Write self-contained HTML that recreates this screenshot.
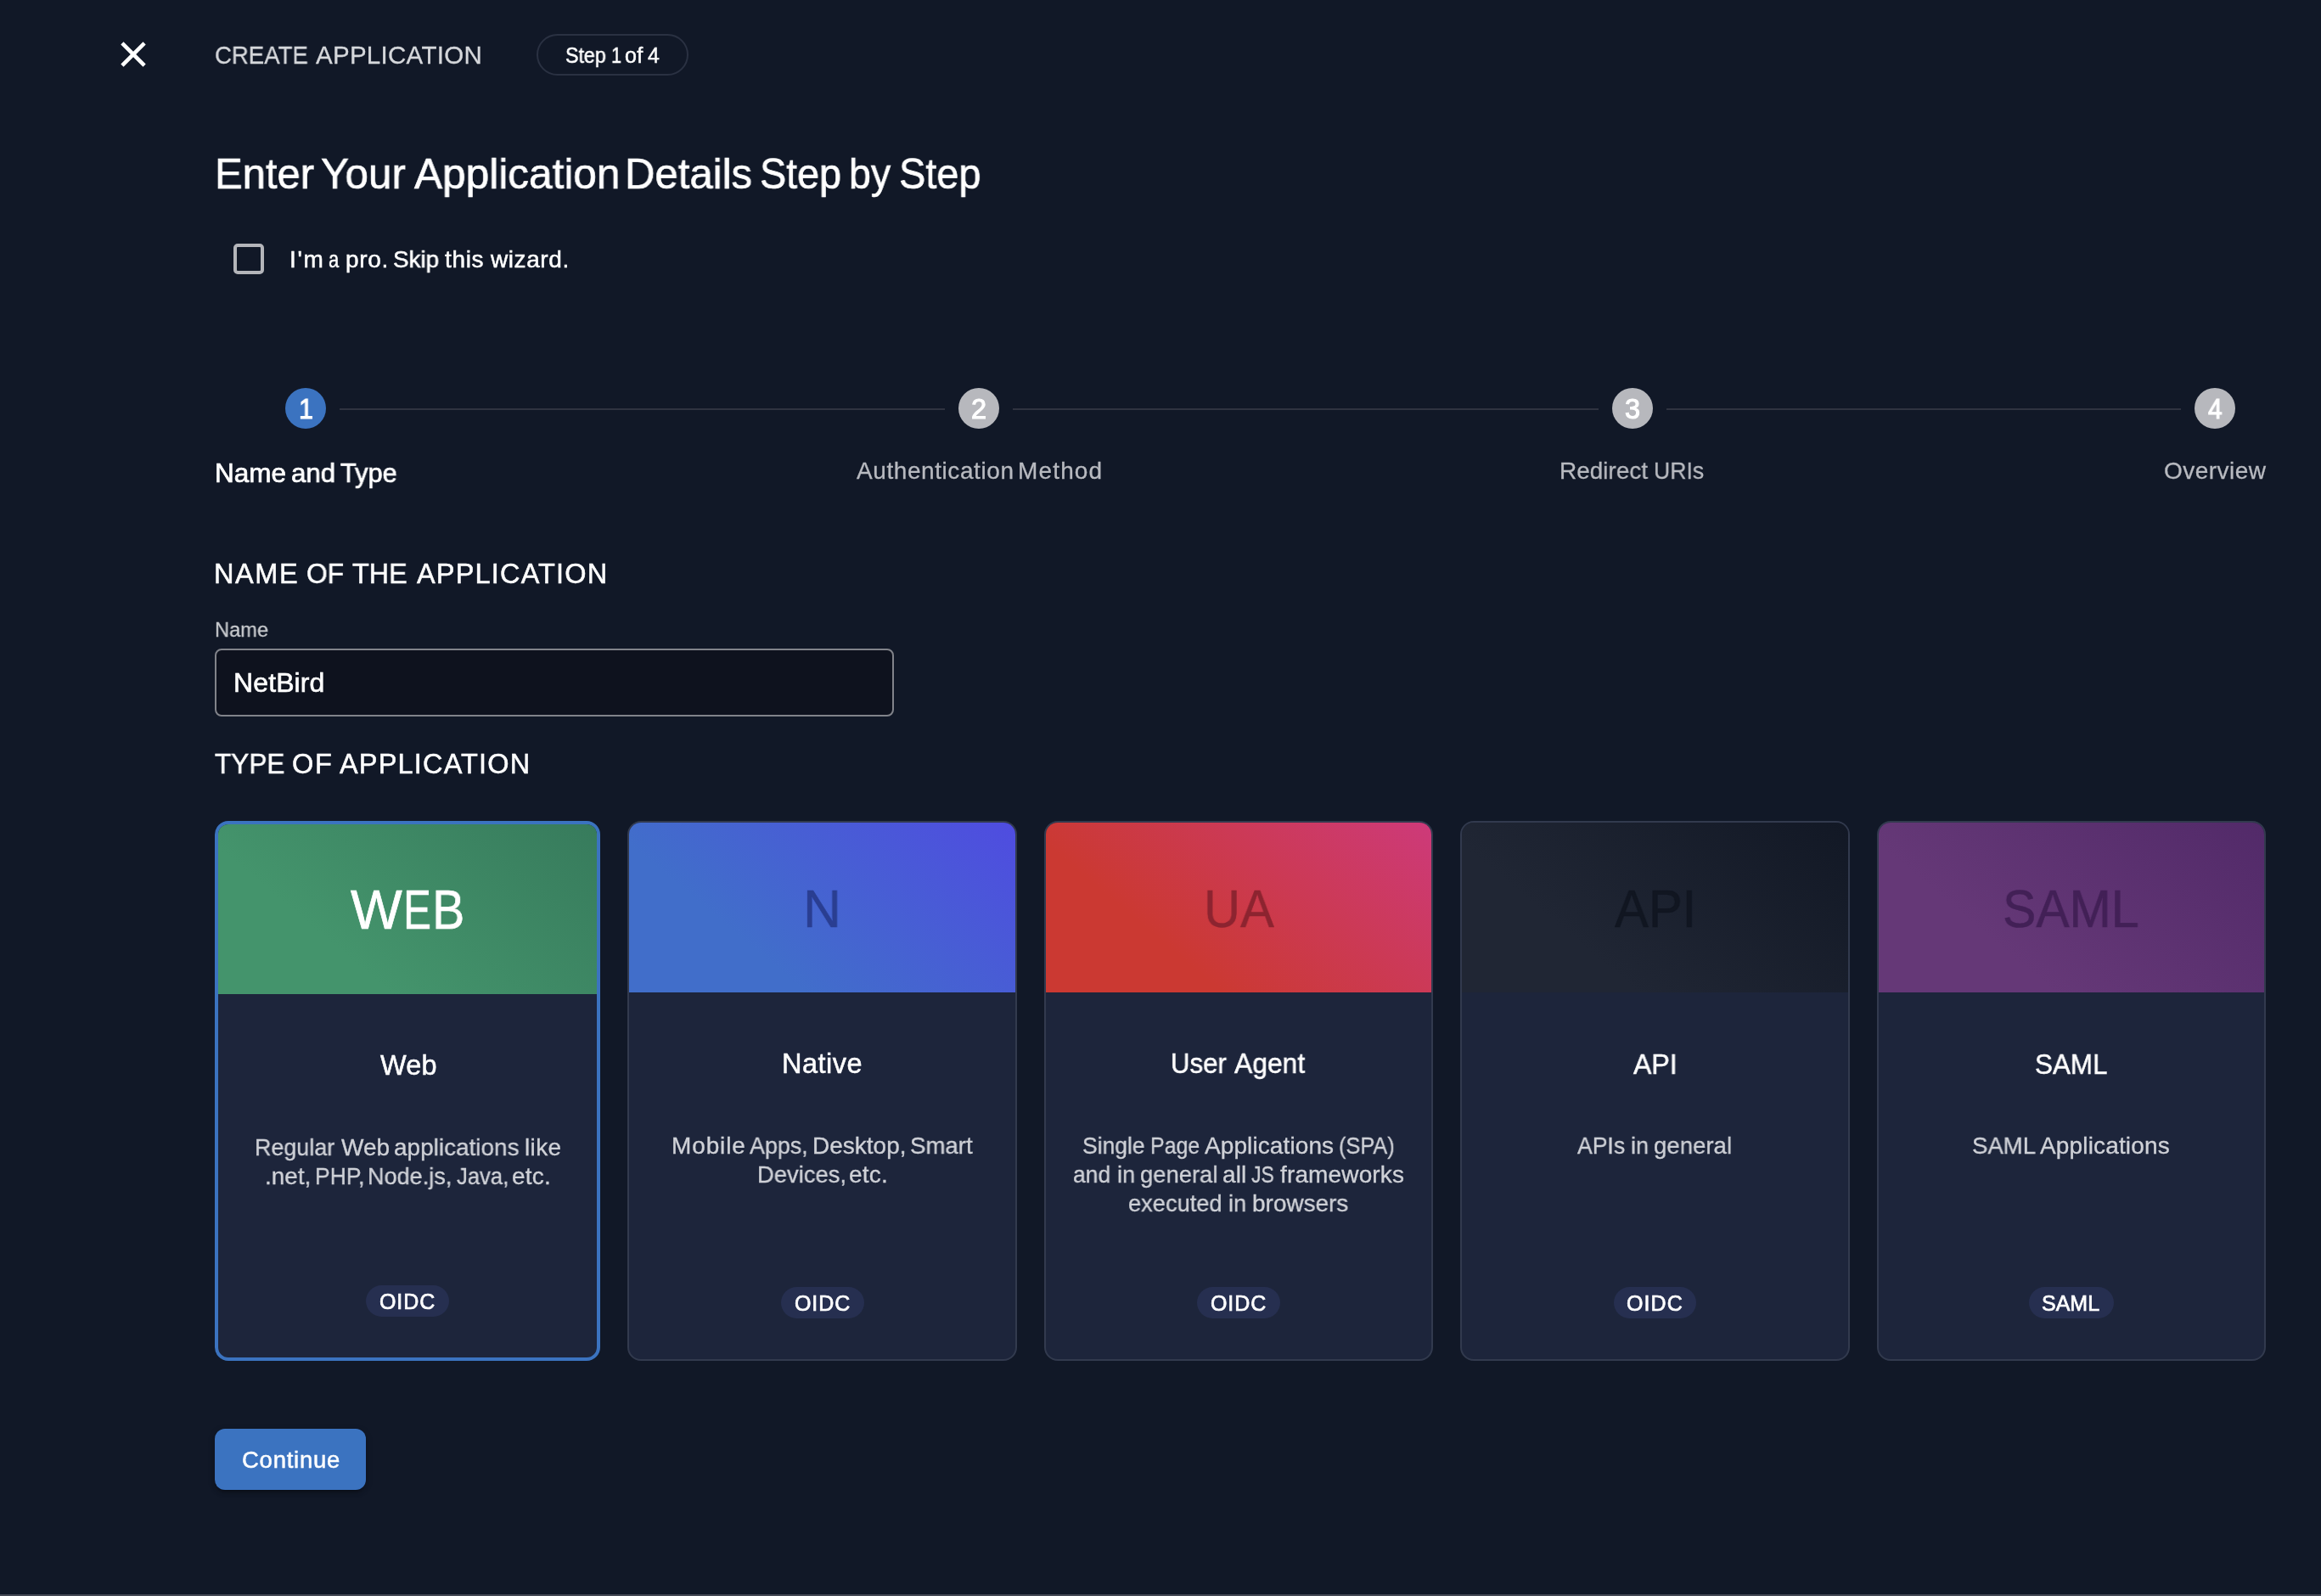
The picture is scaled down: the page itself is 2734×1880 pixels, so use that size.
<!DOCTYPE html>
<html><head><meta charset="utf-8"><title>Create Application</title>
<style>
html,body{margin:0;padding:0}
body{width:2734px;height:1880px;background:#111827;position:relative;overflow:hidden;font-family:'Liberation Sans', sans-serif;}
.t{position:absolute;white-space:nowrap;transform-origin:0 50%;will-change:transform;font-family:'Liberation Sans', sans-serif;}
.abs{position:absolute}
.pill{position:absolute;left:632px;top:40px;width:179px;height:49px;box-sizing:border-box;border:2px solid #2a3142;border-radius:25px}
.cb{position:absolute;left:275px;top:287px;width:36px;height:36px;box-sizing:border-box;border:4px solid #b4b5ba;border-radius:5px}
.circ{position:absolute;top:457px;width:48px;height:48px;border-radius:50%}
.ln{position:absolute;top:481px;height:2px;background:#2f3340}
.inp{position:absolute;left:253px;top:764px;width:800px;height:80px;box-sizing:border-box;border:2px solid #81838a;border-radius:8px;background:#0e121e}
.card{position:absolute;top:967px;height:636px;box-sizing:border-box;border-radius:16px;background:#1d253b;overflow:hidden}
.ch{height:200px}
.badge{position:absolute;height:37px;border-radius:19px;background:#262f50}
.btn{position:absolute;left:253px;top:1683px;width:178px;height:72px;border-radius:12px;background:#3b73c0;box-shadow:0 6px 2px -4px rgba(0,0,0,.2),0 4px 4px rgba(0,0,0,.14),0 2px 10px rgba(0,0,0,.12)}
.bl{position:absolute;left:0;top:1878px;width:2734px;height:2px;background:#444854}
</style></head><body>
<svg class="abs" style="left:138px;top:44.75px" width="38" height="38" viewBox="0 0 38 38"><path d="M7.5 4.3 L19 15.8 L30.5 4.3 L33.7 7.5 L22.2 19 L33.7 30.5 L30.5 33.7 L19 22.2 L7.5 33.7 L4.3 30.5 L15.8 19 L4.3 7.5 Z" fill="#fff"/></svg>
<div class="pill"></div>
<div class="cb"></div>
<div class="circ" style="left:336px;background:#3b73c0"></div>
<div class="circ" style="left:1129px;background:#b7b8bd"></div>
<div class="circ" style="left:1899px;background:#b7b8bd"></div>
<div class="circ" style="left:2585px;background:#b7b8bd"></div>
<div class="ln" style="left:400px;width:713px"></div>
<div class="ln" style="left:1193px;width:690px"></div>
<div class="ln" style="left:1963px;width:606px"></div>
<div class="inp"></div>
<div class="card" style="left:253px;width:454px;border:4px solid #3b73c0;"><div class="ch" style="background:linear-gradient(40deg,#44946c 30%,#377b5c)"></div></div>
<div class="card" style="left:739px;width:459px;border:2px solid #323a4e;"><div class="ch" style="background:linear-gradient(40deg,#416eca 30%,#4f4ce0)"></div></div>
<div class="card" style="left:1230px;width:458px;border:2px solid #323a4e;"><div class="ch" style="background:linear-gradient(40deg,#cb3932 30%,#cd3a7a)"></div></div>
<div class="card" style="left:1720px;width:459px;border:2px solid #323a4e;"><div class="ch" style="background:linear-gradient(40deg,#202634 30%,#121825)"></div></div>
<div class="card" style="left:2211px;width:458px;border:2px solid #323a4e;"><div class="ch" style="background:linear-gradient(40deg,#653877 30%,#522a69)"></div></div>
<div class="badge" style="left:431px;top:1514px;width:98px"></div>
<div class="badge" style="left:920px;top:1516px;width:98px"></div>
<div class="badge" style="left:1410px;top:1516px;width:98px"></div>
<div class="badge" style="left:1900.5px;top:1516px;width:97.5px"></div>
<div class="badge" style="left:2390px;top:1516px;width:100px"></div>
<div class="btn"></div>
<div class="bl"></div>
<span class="t" style="left:2548.75px;top:541.30px;font-size:28px;line-height:28px;color:#b8bac0;letter-spacing:0.464px;-webkit-text-stroke:0.3px #b8bac0;">Overview</span>
<span class="t" style="left:252.57px;top:730.06px;font-size:24.5px;line-height:24.5px;color:#c8cace;-webkit-text-stroke:0.3px #c8cace;transform:scaleX(0.9651);">Name</span>
<span class="t" style="left:274.80px;top:787.91px;font-size:32px;line-height:32px;color:#ffffff;letter-spacing:0.117px;-webkit-text-stroke:0.6px #ffffff;">NetBird</span>
<span class="t" style="left:945.78px;top:1038.84px;font-size:62.5px;line-height:62.5px;color:#2a3e91;-webkit-text-stroke:0.5px #2a3e91;transform:scaleX(0.9931);">N</span>
<span class="t" style="left:1417.94px;top:1039.09px;font-size:62.5px;line-height:62.5px;color:#8c2430;-webkit-text-stroke:0.5px #8c2430;transform:scaleX(0.9518);">UA</span>
<span class="t" style="left:1901.75px;top:1039.09px;font-size:62.5px;line-height:62.5px;color:#111621;-webkit-text-stroke:0.5px #111621;transform:scaleX(0.9553);">API</span>
<span class="t" style="left:2359.17px;top:1039.09px;font-size:62.5px;line-height:62.5px;color:#422056;-webkit-text-stroke:0.5px #422056;transform:scaleX(0.9428);">SAML</span>
<span class="t" style="left:447.50px;top:1239.24px;font-size:32.5px;line-height:32.5px;color:#ffffff;letter-spacing:0.125px;-webkit-text-stroke:0.5px #ffffff;">Web</span>
<span class="t" style="left:921.25px;top:1237.49px;font-size:32.5px;line-height:32.5px;color:#ffffff;letter-spacing:0.500px;-webkit-text-stroke:0.5px #ffffff;">Native</span>
<span class="t" style="left:1923.75px;top:1237.07px;font-size:33px;line-height:33px;color:#ffffff;-webkit-text-stroke:0.5px #ffffff;transform:scaleX(0.9706);">API</span>
<span class="t" style="left:2397.30px;top:1237.07px;font-size:33px;line-height:33px;color:#ffffff;-webkit-text-stroke:0.5px #ffffff;transform:scaleX(0.9517);">SAML</span>
<span class="t" style="left:447.00px;top:1520.84px;font-size:25px;line-height:25px;color:#ffffff;letter-spacing:0.917px;-webkit-text-stroke:0.7px #ffffff;">OIDC</span>
<span class="t" style="left:935.50px;top:1522.59px;font-size:25px;line-height:25px;color:#ffffff;letter-spacing:0.917px;-webkit-text-stroke:0.7px #ffffff;">OIDC</span>
<span class="t" style="left:1425.75px;top:1522.59px;font-size:25px;line-height:25px;color:#ffffff;letter-spacing:0.917px;-webkit-text-stroke:0.7px #ffffff;">OIDC</span>
<span class="t" style="left:1915.70px;top:1522.59px;font-size:25px;line-height:25px;color:#ffffff;letter-spacing:1.100px;-webkit-text-stroke:0.7px #ffffff;">OIDC</span>
<span class="t" style="left:2405.00px;top:1522.59px;font-size:25px;line-height:25px;color:#ffffff;-webkit-text-stroke:0.7px #ffffff;">SAML</span>
<span class="t" style="left:284.50px;top:1706.22px;font-size:27.5px;line-height:27.5px;color:#ffffff;letter-spacing:0.750px;-webkit-text-stroke:0.5px #ffffff;">Continue</span>
<span class="t" style="left:352.13px;top:466.24px;font-size:32.5px;line-height:32.5px;color:#ffffff;-webkit-text-stroke:1.1px #ffffff;transform:scaleX(0.9333);">1</span>
<span class="t" style="left:1144.00px;top:466.24px;font-size:32.5px;line-height:32.5px;color:#ffffff;-webkit-text-stroke:1.1px #ffffff;">2</span>
<span class="t" style="left:1914.00px;top:466.24px;font-size:32.5px;line-height:32.5px;color:#ffffff;-webkit-text-stroke:1.1px #ffffff;">3</span>
<span class="t" style="left:2601.00px;top:466.24px;font-size:32.5px;line-height:32.5px;color:#ffffff;-webkit-text-stroke:1.1px #ffffff;transform:scaleX(0.9167);">4</span>
<span class="t" style="left:665.87px;top:52.64px;font-size:25px;line-height:25px;color:#ffffff;-webkit-text-stroke:0.5px #ffffff;transform:scaleX(0.9280);">Step</span>
<span class="t" style="left:720.12px;top:52.64px;font-size:25px;line-height:25px;color:#ffffff;-webkit-text-stroke:0.5px #ffffff;transform:scaleX(0.8750);">1</span>
<span class="t" style="left:736.20px;top:52.64px;font-size:25px;line-height:25px;color:#ffffff;letter-spacing:0.400px;-webkit-text-stroke:0.5px #ffffff;">of</span>
<span class="t" style="left:762.80px;top:52.64px;font-size:25px;line-height:25px;color:#ffffff;-webkit-text-stroke:0.5px #ffffff;transform:scaleX(0.9857);">4</span>
<span class="t" style="left:252.86px;top:50.03px;font-size:29.5px;line-height:29.5px;color:#d5d7db;-webkit-text-stroke:0.3px #d5d7db;transform:scaleX(0.9353);">CREATE</span>
<span class="t" style="left:371.80px;top:50.03px;font-size:29.5px;line-height:29.5px;color:#d5d7db;letter-spacing:0.280px;-webkit-text-stroke:0.3px #d5d7db;">APPLICATION</span>
<span class="t" style="left:252.51px;top:180.12px;font-size:50.3px;line-height:50.3px;color:#ffffff;-webkit-text-stroke:0.65px #ffffff;transform:scaleX(0.9733);">Enter</span>
<span class="t" style="left:378.32px;top:180.12px;font-size:50.3px;line-height:50.3px;color:#ffffff;-webkit-text-stroke:0.65px #ffffff;transform:scaleX(0.9820);">Your</span>
<span class="t" style="left:487.50px;top:180.12px;font-size:50.3px;line-height:50.3px;color:#ffffff;-webkit-text-stroke:0.65px #ffffff;transform:scaleX(0.9856);">Application</span>
<span class="t" style="left:736.09px;top:180.12px;font-size:50.3px;line-height:50.3px;color:#ffffff;-webkit-text-stroke:0.65px #ffffff;transform:scaleX(0.9764);">Details</span>
<span class="t" style="left:894.89px;top:180.12px;font-size:50.3px;line-height:50.3px;color:#ffffff;-webkit-text-stroke:0.65px #ffffff;transform:scaleX(0.9275);">Step</span>
<span class="t" style="left:999.73px;top:180.12px;font-size:50.3px;line-height:50.3px;color:#ffffff;-webkit-text-stroke:0.65px #ffffff;transform:scaleX(0.9250);">by</span>
<span class="t" style="left:1059.38px;top:180.12px;font-size:50.3px;line-height:50.3px;color:#ffffff;-webkit-text-stroke:0.65px #ffffff;transform:scaleX(0.9325);">Step</span>
<span class="t" style="left:341.00px;top:292.30px;font-size:28px;line-height:28px;color:#ffffff;letter-spacing:1.625px;-webkit-text-stroke:0.5px #ffffff;">I'm</span>
<span class="t" style="left:386.72px;top:292.30px;font-size:28px;line-height:28px;color:#ffffff;-webkit-text-stroke:0.5px #ffffff;transform:scaleX(0.7833);">a</span>
<span class="t" style="left:407.00px;top:292.30px;font-size:28px;line-height:28px;color:#ffffff;letter-spacing:0.667px;-webkit-text-stroke:0.5px #ffffff;">pro.</span>
<span class="t" style="left:462.76px;top:292.30px;font-size:28px;line-height:28px;color:#ffffff;-webkit-text-stroke:0.5px #ffffff;transform:scaleX(0.9906);">Skip</span>
<span class="t" style="left:524.25px;top:292.30px;font-size:28px;line-height:28px;color:#ffffff;letter-spacing:0.667px;-webkit-text-stroke:0.5px #ffffff;">this</span>
<span class="t" style="left:577.50px;top:292.30px;font-size:28px;line-height:28px;color:#ffffff;letter-spacing:0.583px;-webkit-text-stroke:0.5px #ffffff;">wizard.</span>
<span class="t" style="left:252.60px;top:542.04px;font-size:31.5px;line-height:31.5px;color:#ffffff;letter-spacing:0.033px;-webkit-text-stroke:0.7px #ffffff;">Name</span>
<span class="t" style="left:342.61px;top:542.04px;font-size:31.5px;line-height:31.5px;color:#ffffff;-webkit-text-stroke:0.7px #ffffff;transform:scaleX(0.9920);">and</span>
<span class="t" style="left:400.60px;top:542.04px;font-size:31.5px;line-height:31.5px;color:#ffffff;-webkit-text-stroke:0.7px #ffffff;transform:scaleX(0.9765);">Type</span>
<span class="t" style="left:1009.00px;top:541.30px;font-size:28px;line-height:28px;color:#b8bac0;letter-spacing:0.577px;-webkit-text-stroke:0.3px #b8bac0;">Authentication</span>
<span class="t" style="left:1198.50px;top:541.30px;font-size:28px;line-height:28px;color:#b8bac0;letter-spacing:1.150px;-webkit-text-stroke:0.3px #b8bac0;">Method</span>
<span class="t" style="left:1837.25px;top:541.30px;font-size:28px;line-height:28px;color:#b8bac0;-webkit-text-stroke:0.3px #b8bac0;transform:scaleX(0.9976);">Redirect</span>
<span class="t" style="left:1948.10px;top:541.30px;font-size:28px;line-height:28px;color:#b8bac0;-webkit-text-stroke:0.3px #b8bac0;transform:scaleX(0.9500);">URIs</span>
<span class="t" style="left:252.25px;top:659.99px;font-size:32.5px;line-height:32.5px;color:#ffffff;letter-spacing:1.583px;-webkit-text-stroke:0.5px #ffffff;">NAME</span>
<span class="t" style="left:360.77px;top:659.99px;font-size:32.5px;line-height:32.5px;color:#ffffff;-webkit-text-stroke:0.5px #ffffff;transform:scaleX(0.9767);">OF</span>
<span class="t" style="left:415.00px;top:659.99px;font-size:32.5px;line-height:32.5px;color:#ffffff;-webkit-text-stroke:0.5px #ffffff;transform:scaleX(0.9961);">THE</span>
<span class="t" style="left:490.75px;top:659.99px;font-size:32.5px;line-height:32.5px;color:#ffffff;letter-spacing:1.175px;-webkit-text-stroke:0.5px #ffffff;">APPLICATION</span>
<span class="t" style="left:253.00px;top:884.49px;font-size:32.5px;line-height:32.5px;color:#ffffff;-webkit-text-stroke:0.5px #ffffff;transform:scaleX(0.9702);">TYPE</span>
<span class="t" style="left:343.50px;top:884.49px;font-size:32.5px;line-height:32.5px;color:#ffffff;letter-spacing:1.750px;-webkit-text-stroke:0.5px #ffffff;">OF</span>
<span class="t" style="left:399.50px;top:884.49px;font-size:32.5px;line-height:32.5px;color:#ffffff;letter-spacing:1.175px;-webkit-text-stroke:0.5px #ffffff;">APPLICATION</span>
<span class="t" style="left:299.58px;top:1337.80px;font-size:28px;line-height:28px;color:#cfd1d7;-webkit-text-stroke:0.35px #cfd1d7;transform:scaleX(0.9604);">Regular</span>
<span class="t" style="left:401.50px;top:1337.80px;font-size:28px;line-height:28px;color:#cfd1d7;-webkit-text-stroke:0.35px #cfd1d7;">Web</span>
<span class="t" style="left:464.30px;top:1337.80px;font-size:28px;line-height:28px;color:#cfd1d7;-webkit-text-stroke:0.35px #cfd1d7;transform:scaleX(0.9973);">applications</span>
<span class="t" style="left:617.60px;top:1337.80px;font-size:28px;line-height:28px;color:#cfd1d7;letter-spacing:0.367px;-webkit-text-stroke:0.35px #cfd1d7;">like</span>
<span class="t" style="left:311.61px;top:1371.80px;font-size:28px;line-height:28px;color:#cfd1d7;-webkit-text-stroke:0.35px #cfd1d7;transform:scaleX(0.9961);">.net,</span>
<span class="t" style="left:371.21px;top:1371.80px;font-size:28px;line-height:28px;color:#cfd1d7;-webkit-text-stroke:0.35px #cfd1d7;transform:scaleX(0.9448);">PHP,</span>
<span class="t" style="left:433.17px;top:1371.80px;font-size:28px;line-height:28px;color:#cfd1d7;-webkit-text-stroke:0.35px #cfd1d7;transform:scaleX(0.9667);">Node.js,</span>
<span class="t" style="left:537.60px;top:1371.80px;font-size:28px;line-height:28px;color:#cfd1d7;-webkit-text-stroke:0.35px #cfd1d7;transform:scaleX(0.9154);">Java,</span>
<span class="t" style="left:603.00px;top:1371.80px;font-size:28px;line-height:28px;color:#cfd1d7;letter-spacing:0.233px;-webkit-text-stroke:0.35px #cfd1d7;">etc.</span>
<span class="t" style="left:791.30px;top:1336.10px;font-size:28px;line-height:28px;color:#cfd1d7;letter-spacing:0.880px;-webkit-text-stroke:0.35px #cfd1d7;">Mobile</span>
<span class="t" style="left:882.90px;top:1336.10px;font-size:28px;line-height:28px;color:#cfd1d7;-webkit-text-stroke:0.35px #cfd1d7;transform:scaleX(0.9600);">Apps,</span>
<span class="t" style="left:956.70px;top:1336.10px;font-size:28px;line-height:28px;color:#cfd1d7;-webkit-text-stroke:0.35px #cfd1d7;transform:scaleX(0.9991);">Desktop,</span>
<span class="t" style="left:1071.51px;top:1336.10px;font-size:28px;line-height:28px;color:#cfd1d7;-webkit-text-stroke:0.35px #cfd1d7;transform:scaleX(0.9851);">Smart</span>
<span class="t" style="left:892.14px;top:1370.10px;font-size:28px;line-height:28px;color:#cfd1d7;-webkit-text-stroke:0.35px #cfd1d7;transform:scaleX(0.9786);">Devices,</span>
<span class="t" style="left:1000.30px;top:1370.10px;font-size:28px;line-height:28px;color:#cfd1d7;letter-spacing:0.233px;-webkit-text-stroke:0.35px #cfd1d7;">etc.</span>
<span class="t" style="left:1274.96px;top:1336.10px;font-size:28px;line-height:28px;color:#cfd1d7;-webkit-text-stroke:0.35px #cfd1d7;transform:scaleX(0.9447);">Single</span>
<span class="t" style="left:1354.62px;top:1336.10px;font-size:28px;line-height:28px;color:#cfd1d7;-webkit-text-stroke:0.35px #cfd1d7;transform:scaleX(0.8905);">Page</span>
<span class="t" style="left:1419.20px;top:1336.10px;font-size:28px;line-height:28px;color:#cfd1d7;letter-spacing:0.100px;-webkit-text-stroke:0.35px #cfd1d7;">Applications</span>
<span class="t" style="left:1577.49px;top:1336.10px;font-size:28px;line-height:28px;color:#cfd1d7;-webkit-text-stroke:0.35px #cfd1d7;transform:scaleX(0.9057);">(SPA)</span>
<span class="t" style="left:1264.06px;top:1369.80px;font-size:28px;line-height:28px;color:#cfd1d7;-webkit-text-stroke:0.35px #cfd1d7;transform:scaleX(0.9444);">and</span>
<span class="t" style="left:1315.63px;top:1369.80px;font-size:28px;line-height:28px;color:#cfd1d7;-webkit-text-stroke:0.35px #cfd1d7;transform:scaleX(0.9700);">in</span>
<span class="t" style="left:1342.72px;top:1369.80px;font-size:28px;line-height:28px;color:#cfd1d7;-webkit-text-stroke:0.35px #cfd1d7;transform:scaleX(0.9791);">general</span>
<span class="t" style="left:1439.90px;top:1369.80px;font-size:28px;line-height:28px;color:#cfd1d7;letter-spacing:0.150px;-webkit-text-stroke:0.35px #cfd1d7;">all</span>
<span class="t" style="left:1474.40px;top:1369.80px;font-size:28px;line-height:28px;color:#cfd1d7;-webkit-text-stroke:0.35px #cfd1d7;transform:scaleX(0.8187);">JS</span>
<span class="t" style="left:1507.90px;top:1369.80px;font-size:28px;line-height:28px;color:#cfd1d7;letter-spacing:0.144px;-webkit-text-stroke:0.35px #cfd1d7;">frameworks</span>
<span class="t" style="left:1329.23px;top:1403.70px;font-size:28px;line-height:28px;color:#cfd1d7;-webkit-text-stroke:0.35px #cfd1d7;transform:scaleX(0.9730);">executed</span>
<span class="t" style="left:1446.83px;top:1403.70px;font-size:28px;line-height:28px;color:#cfd1d7;-webkit-text-stroke:0.35px #cfd1d7;transform:scaleX(0.9700);">in</span>
<span class="t" style="left:1474.80px;top:1403.70px;font-size:28px;line-height:28px;color:#cfd1d7;-webkit-text-stroke:0.35px #cfd1d7;transform:scaleX(0.9973);">browsers</span>
<span class="t" style="left:1858.10px;top:1336.30px;font-size:28px;line-height:28px;color:#cfd1d7;-webkit-text-stroke:0.35px #cfd1d7;transform:scaleX(0.9492);">APIs</span>
<span class="t" style="left:1921.44px;top:1336.30px;font-size:28px;line-height:28px;color:#cfd1d7;-webkit-text-stroke:0.35px #cfd1d7;transform:scaleX(0.9650);">in</span>
<span class="t" style="left:1948.41px;top:1336.30px;font-size:28px;line-height:28px;color:#cfd1d7;-webkit-text-stroke:0.35px #cfd1d7;transform:scaleX(0.9857);">general</span>
<span class="t" style="left:2323.12px;top:1336.30px;font-size:28px;line-height:28px;color:#cfd1d7;-webkit-text-stroke:0.35px #cfd1d7;transform:scaleX(0.9840);">SAML</span>
<span class="t" style="left:2403.40px;top:1336.30px;font-size:28px;line-height:28px;color:#cfd1d7;letter-spacing:0.155px;-webkit-text-stroke:0.35px #cfd1d7;">Applications</span>
<span class="t" style="left:412.80px;top:1040.02px;font-size:64px;line-height:64px;color:#ffffff;-webkit-text-stroke:0.7px #ffffff;transform:scaleX(1.0049);">W</span>
<span class="t" style="left:475.16px;top:1040.02px;font-size:64px;line-height:64px;color:#ffffff;-webkit-text-stroke:0.7px #ffffff;transform:scaleX(0.7686);">E</span>
<span class="t" style="left:508.91px;top:1040.02px;font-size:64px;line-height:64px;color:#ffffff;-webkit-text-stroke:0.7px #ffffff;transform:scaleX(0.8971);">B</span>
<span class="t" style="left:1379.33px;top:1237.49px;font-size:32.5px;line-height:32.5px;color:#ffffff;-webkit-text-stroke:0.5px #ffffff;transform:scaleX(0.9590);">User</span>
<span class="t" style="left:1454.25px;top:1237.49px;font-size:32.5px;line-height:32.5px;color:#ffffff;-webkit-text-stroke:0.5px #ffffff;transform:scaleX(0.9794);">Agent</span>
<script>(function(){var w=window.innerWidth||0;if(w>200&&Math.abs(w-2734)>2){document.documentElement.style.zoom=(w/2734);}})();</script>
</body></html>
